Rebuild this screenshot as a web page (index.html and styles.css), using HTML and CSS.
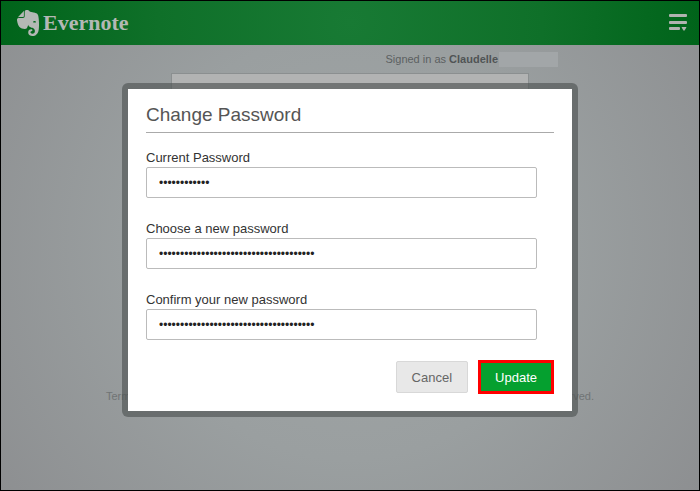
FILE: index.html
```
<!DOCTYPE html>
<html lang="en">
<head>
    <meta charset="utf-8">
    <title>Evernote</title>
    <meta name="viewport" content="width=device-width, initial-scale=1">
    <link rel="stylesheet" href="styles.css">
</head>

<body>

    <header class="topbar">
        <a href="#" class="brand">
            <svg class="brand-icon" viewBox="0 0 24 24" aria-hidden="true">
                <path d="M8.222 5.393c0 .239-.02.637-.256.895-.257.24-.652.259-.888.259H4.552c-.73 0-1.165 0-1.46.04-.159.02-.356.1-.455.14-.04.019-.04 0-.02-.02L8.38.796c.02-.02.04-.02.02.02-.04.099-.118.298-.138.457-.04.298-.04.736-.04 1.472zm5.348 17.869c-.67-.438-1.026-1.015-1.164-1.373a2.924 2.924 0 0 1-.217-1.095 3.007 3.007 0 0 1 3-3.004c.493 0 .888.398.888.895a.88.88 0 0 1-.454.776c-.099.06-.237.1-.336.12-.098.02-.473.06-.65.218-.198.16-.356.418-.356.697 0 .298.118.577.316.776.355.358.829.557 1.342.557a2.436 2.436 0 0 0 2.427-2.447c0-1.214-.809-2.29-1.875-2.766-.158-.08-.414-.14-.651-.2a8.04 8.04 0 0 0-.592-.1c-.829-.1-2.901-.755-3.04-2.605 0 0-.611 2.785-1.835 3.54-.118.06-.276.12-.454.16-.177.04-.374.06-.434.06-1.993.12-4.105-.517-5.565-2.03 0 0-.987-.815-1.5-3.103-.118-.558-.355-1.553-.493-2.488-.06-.338-.08-.597-.099-.836 0-.975.592-1.631 1.342-1.73h4.026c.69 0 1.086-.18 1.342-.42.336-.317.415-.775.415-1.312V1.354C9.05.617 9.703 0 10.669 0h.474c.197 0 .434.02.651.04.158.02.296.06.533.12 1.204.298 1.46 1.532 1.46 1.532s2.27.398 3.415.597c1.085.199 3.77.378 4.282 3.104 1.204 6.487.474 12.775.415 12.775-.849 6.129-5.901 5.83-5.901 5.83a4.1 4.1 0 0 1-2.429-.736zm4.54-13.034c-.652-.06-1.204.2-1.402.697-.04.1-.079.219-.059.278.02.06.06.08.099.1.237.12.631.179 1.204.239.572.06.967.1 1.223.06.04 0 .08-.02.119-.08.04-.06.02-.18.02-.278-.06-.557-.553-.955-1.204-1.016z"/>
            </svg>
            Evernote
        </a>
        <button type="button" class="menu" aria-label="Menu">
            <svg class="menu-icon" viewBox="0 0 18 18" aria-hidden="true">
                <rect x="0" y="0" width="18" height="3" rx="1"/>
                <rect x="0" y="7" width="18" height="3" rx="1"/>
                <rect x="0" y="13" width="11" height="3" rx="1"/>
                <path d="M12.500 13h5l-1 2-1.500 2-1.500-2z"/>
            </svg>
        </button>
    </header>

    <main class="page">
        <div class="account">
            <span>Signed in as <b>Claudelle</b></span>
            <span class="account-blank"></span>
        </div>
        <div class="card"></div>
    </main>

    <footer class="footer">
        <a href="#">Terms of Service</a>
        <span>All rights reserved.</span>
    </footer>

    <div class="overlay">
        <form class="modal" role="dialog" aria-labelledby="modal-title">
            <h1 class="modal-title" id="modal-title">Change Password</h1>

            <div class="fields">
                <div class="field">
                    <label for="current">Current Password</label>
                    <input type="password" id="current" value="abcdefghijkl">
                </div>
                <div class="field">
                    <label for="new">Choose a new password</label>
                    <input type="password" id="new" value="abcdefghijklmnopqrstuvwxyz01234567890">
                </div>
                <div class="field">
                    <label for="confirm">Confirm your new password</label>
                    <input type="password" id="confirm" value="abcdefghijklmnopqrstuvwxyz01234567890">
                </div>
            </div>

            <div class="buttons">
                <button type="button" class="btn">Cancel</button>
                <button type="submit" class="btn btn-update">Update</button>
            </div>
        </form>
    </div>

</body>

</html>
```
FILE: styles.css
```
* {
    box-sizing: border-box;
}

body {
    display: flex;
    flex-direction: column;
    min-height: 100vh;
    margin: 0;
    border: 1px solid #000;
    background: radial-gradient(circle at center, #a1a6a6 0%, #9a9fa0 50%, #8d8f91 100%);
    font-family: "Liberation Sans", Arial, sans-serif;
    font-size: 13px;
    color: #333;
}

.topbar {
    display: flex;
    align-items: center;
    justify-content: space-between;
    height: 44px;
    padding: 0 12px 0 14px;
    background: radial-gradient(circle at center, #187a34 0%, #0f7029 55%, #00641a 100%);
}

.brand {
    display: flex;
    align-items: center;
    gap: 2px;
    font-family: "Liberation Serif", "Times New Roman", serif;
    font-size: 22px;
    font-weight: bold;
    line-height: 28px;
    color: #b3b8b5;
    text-decoration: none;
}

.brand-icon {
    width: 26px;
    height: 26px;
    fill: #b3b8b5;
}

.menu {
    display: flex;
    padding: 0;
    border: 0;
    background: none;
}

.menu-icon {
    width: 18px;
    height: 18px;
    fill: #b0b3b0;
}

.page {
    flex: 1;
    padding-top: 6px;
}

.account {
    display: flex;
    align-items: center;
    justify-content: flex-end;
    gap: 1px;
    max-width: 416px;
    margin: 0 auto;
    font-size: 11px;
    line-height: 16px;
    color: #5c6061;
}

.account b {
    color: #505455;
}

.account-blank {
    width: 59px;
    height: 15px;
    background: #a2a6a8;
}

.card {
    max-width: 358px;
    height: 240px;
    margin: 6px auto 0;
    border: 1px solid #8b8f90;
    background: #b2b3b3;
}

.footer {
    display: flex;
    justify-content: space-between;
    width: 100%;
    max-width: 488px;
    margin: 0 auto;
    padding-bottom: 86px;
    font-size: 11px;
    line-height: 16px;
    color: #707475;
}

.footer a {
    color: #707475;
    text-decoration: none;
}

/* dialog */
.overlay {
    position: absolute;
    top: 0;
    left: 0;
    right: 0;
    padding-top: 83px;
}

.modal {
    max-width: 456px;
    margin: 0 auto;
    padding: 14px 18px 17px;
    border: 6px solid rgba(80, 84, 84, 0.65);
    border-radius: 6px;
    background: #fff;
    background-clip: padding-box;
}

.modal-title {
    margin: 0;
    padding-bottom: 5px;
    border-bottom: 1px solid #aaa;
    font-size: 19px;
    font-weight: normal;
    line-height: 24px;
    color: #555;
}

.fields {
    display: flex;
    flex-direction: column;
    gap: 23px;
    padding: 17px 17px 20px 0;
}

.field {
    display: flex;
    flex-direction: column;
    gap: 1px;
}

.field label {
    line-height: 16px;
}

.field input {
    width: 100%;
    height: 31px;
    padding: 0 12px;
    border: 1px solid #bbb;
    border-radius: 2px;
    background: #fff;
    font-family: inherit;
    font-size: 12px;
    color: #222;
}

.buttons {
    display: flex;
    align-items: center;
    justify-content: flex-end;
    gap: 10px;
}

.btn {
    height: 32px;
    padding: 0 15px;
    border: 1px solid #d8d8d8;
    border-radius: 2px;
    background: #e8e8e8;
    font-family: inherit;
    font-size: 13px;
    color: #666;
}

.btn-update {
    height: 34px;
    padding: 0 14px;
    border: 3px solid #f00;
    border-radius: 0;
    background: #05a02f;
    color: #fff;
}
```
